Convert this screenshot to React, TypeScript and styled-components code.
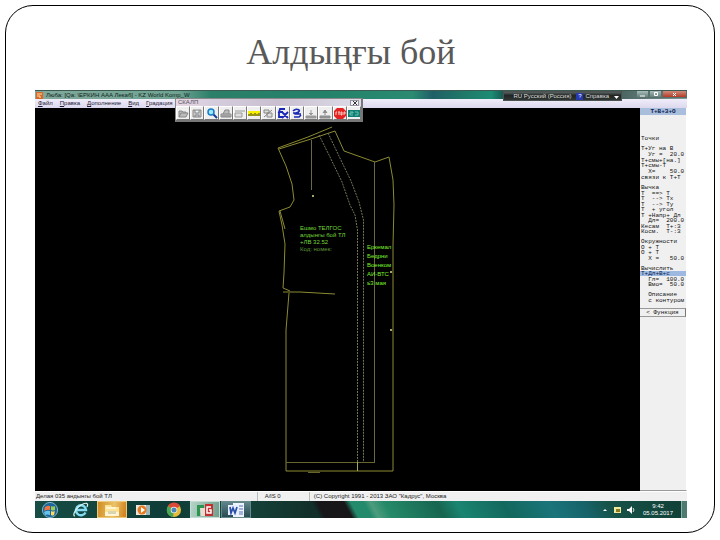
import React from "react";
import styled, { createGlobalStyle, css } from "styled-components";

const Global = createGlobalStyle`
  * { box-sizing: border-box; }
  body { margin: 0; background: #fff; font-family: "Liberation Sans", Arial, sans-serif; }
  button { font: inherit; color: inherit; border: 0; padding: 0; margin: 0; background: none; cursor: pointer; }
`;

const Page = styled.div`
  min-height: 100vh;
  padding: 5px 5px 7px;
  display: flex;
`;

const Frame = styled.main`
  flex: 1;
  display: flex;
  flex-direction: column;
  border: 1px solid #000;
  border-radius: 28px;
  padding: 0 27px 14px 29px;
`;

const Heading = styled.h1`
  margin: 0;
  height: 84px;
  padding: 24px 20px 0 0;
  text-align: center;
  font: 400 36px/44px "Liberation Serif", "Times New Roman", serif;
  color: #595959;
`;

const Screen = styled.section`
  position: relative;
  flex: 1;
  display: flex;
  flex-direction: column;
  background: #000;
`;

const TitleBar = styled.header`
  height: 9px;
  display: flex;
  align-items: center;
  gap: 3px;
  padding-left: 1px;
  font-size: 6px;
  line-height: 8px;
  color: #10241f;
  white-space: nowrap;
  border-top: 1px solid #3c5a52;
  background: linear-gradient(90deg, #81a99b 0, #6fa391 22%, #2c7f69 27%, #23826a 45%, #2a8a72 58%, #1f5f66 61%, #207a69 66%, #1c8c74 70%, #14373a 73%, #44605d 89%, #849995 100%);
`;

const AppIcon = styled.svg`
  width: 7px;
  height: 7px;
`;

const WindowButtons = styled.div`
  margin-left: auto;
  display: flex;
  align-self: flex-start;
`;

const WindowButton = styled.button<{ $close?: boolean }>`
  width: ${(p) => (p.$close ? 25 : 13)}px;
  height: 7px;
  display: grid;
  place-items: center;
  color: #fff;
  border: 1px solid #59706d;
  border-top: 0;
  background: ${(p) => (p.$close ? "linear-gradient(#d08b7c, #b33b27)" : "linear-gradient(#a9bdba, #637f7c)")};
  svg { width: 7px; height: 5px; }
`;

const MenuBar = styled.nav`
  height: 9px;
  display: flex;
  align-items: center;
  gap: 7px;
  padding-left: 3px;
  font-size: 6px;
  line-height: 9px;
  color: #1d1b35;
  background: linear-gradient(#f0edfa, #dcd8ee);
`;

const MenuItem = styled.button`
  &::first-letter { text-decoration: underline; }
`;

const Workspace = styled.div`
  flex: 1;
  display: flex;
`;

const Canvas = styled.svg`
  flex: 1;
  min-width: 0;
  display: block;
  background: #000;
`;

const SidePanel = styled.aside`
  width: 47px;
  display: flex;
  flex-direction: column;
  background: #f0f0f0;
  border-right: 1px solid #fff;
  border-bottom: 1px solid #999;
  font: 6px/5px "Liberation Mono", "Courier New", monospace;
  color: #111;
  white-space: pre;
`;

const PanelTitle = styled.div`
  height: 7px;
  margin-bottom: 21px;
  font-weight: 700;
  line-height: 7px;
  text-align: center;
  color: #0c1d4c;
  background: #a9bddd;
`;

const Group = styled.div<{ $height: number }>`
  height: ${(p) => p.$height}px;
  margin-bottom: 5px;
  display: flex;
  flex-direction: column;
  justify-content: space-between;
`;

const Command = styled.button<{ $active?: boolean }>`
  height: 5px;
  padding-left: 1px;
  text-align: left;
  line-height: 5px;
  white-space: pre;
  ${(p) => p.$active && css`background: #9db9e2; color: #0c1d4c;`}
`;

const FunctionButton = styled.button`
  height: 9px;
  border-top: 1px solid #999;
  border-bottom: 1px solid #999;
  border-right: 1px solid #777;
  text-align: center;
  line-height: 7px;
`;

const StatusBar = styled.footer`
  height: 10px;
  display: flex;
  font-size: 6px;
  line-height: 9px;
  color: #222;
  background: #f0f0f0;
  border-top: 1px solid #fff;
  white-space: nowrap;
`;

const StatusCell = styled.span<{ $basis?: number }>`
  flex: ${(p) => (p.$basis ? `0 0 ${p.$basis}%` : "1")};
  padding-left: 1px;
  & + & { border-left: 1px solid #bbb; padding-left: 4px; }
`;

const StatusCode = styled(StatusCell)`
  && { padding-left: 7px; }
`;

const Taskbar = styled.div`
  height: 17px;
  display: flex;
  align-items: stretch;
  background: linear-gradient(62deg, transparent 43%, #17171a 44%, #17171a 48%, #238a6b 49%, #238a6b 51%, #4d9c7e 52%, #258a69 54%, #176650 62%, #1a8571 65%, #13685d 72%, #1a747a 79%, #17636a 84%, #165248 88%, #103e35 100%),
    linear-gradient(90deg, #164d45, #0f3c36 20%, #15473f 30%, #123029 42%);
`;

const TaskButton = styled.button<{ $tone?: "gold" | "light" | "dark" }>`
  width: 30px;
  margin-right: 1px;
  display: grid;
  place-items: center;
  svg { width: 18px; height: 16px; }
  ${(p) => p.$tone === "gold" && css`background: linear-gradient(100deg, #d18c24, #eac36a 55%, #d07c18); border: 1px solid #edcb7a;`}
  ${(p) => p.$tone === "light" && css`background: linear-gradient(100deg, #b4d4c7, #719f8d); border: 1px solid #c5ddd4;`}
  ${(p) => p.$tone === "dark" && css`background: linear-gradient(#60858a, #284b52); border: 1px solid #66898b;`}
`;

const Tray = styled.div`
  margin-left: auto;
  display: flex;
  align-items: center;
  gap: 5px;
  color: #fff;
  svg { width: 8px; height: 8px; }
`;

const Clock = styled.time`
  width: 36px;
  text-align: center;
  font-size: 6px;
  line-height: 7px;
`;

const ShowDesktop = styled.button`
  width: 6px;
  align-self: stretch;
  border-left: 1px solid #8ab1a8;
  background: #4d7b70;
`;

const Palette = styled.div`
  position: absolute;
  left: 140px;
  top: 8px;
  width: 188px;
  border: 1px solid #888;
  border-right: 2px solid #777;
  border-bottom: 2px solid #777;
  background: #ddd;
`;

const PaletteTitle = styled.div`
  height: 7px;
  display: flex;
  justify-content: space-between;
  align-items: center;
  padding: 0 2px;
  font-size: 6px;
  line-height: 7px;
  color: #55505e;
  background: linear-gradient(90deg, #e8d7e2, #d5cddd 20%, #c9bfd0 55%, #dedce8);
`;

const PaletteClose = styled.button`
  width: 9px;
  height: 6px;
  display: grid;
  place-items: center;
  background: #f2f2f6;
  border: 1px solid #9695a2;
  svg { width: 4px; height: 4px; }
`;

const Tools = styled.div`
  display: grid;
  grid-template-columns: repeat(13, 1fr);
`;

const Tool = styled.button`
  height: 14px;
  display: grid;
  place-items: center;
  background: #efefef;
  border: 1px solid #fff;
  border-right-color: #777;
  border-bottom-color: #777;
  svg { width: 12px; height: 11px; }
`;

const LanguageBar = styled.div`
  position: absolute;
  right: 65px;
  top: 1px;
  width: 119px;
  height: 10px;
  display: flex;
  align-items: center;
  justify-content: flex-end;
  gap: 5px;
  padding-right: 2px;
  font-size: 6px;
  line-height: 8px;
  white-space: nowrap;
  color: #ddd;
  background: linear-gradient(#59605f, #202524 45%, #303634);
  border: 1px solid #4b5351;
  svg { width: 5px; height: 6px; }
`;

const HelpButton = styled.button`
  display: flex;
  align-items: center;
  gap: 2px;
`;

const HelpMark = styled.span`
  width: 7px;
  height: 7px;
  text-align: center;
  line-height: 7px;
  color: #fff;
  background: #2539b0;
`;

const menus = ["Файл", "Правка", "Дополнение", "Вид", "Градация"];

const groups: { height: number; lines: string[] }[] = [
  { height: 5, lines: ["Точки"] },
  { height: 34, lines: ["Т+Уг на В", "  Уг =  20.0", "Т+смы+[на.]", "Т+смы-Т", "  Х=    50.0", "связи к Т+Т"] },
  { height: 49, lines: ["Вычка", "Т  ==> Т", "Т  --> Тх", "Т  --> Ту", "Т  + угол", "Т +Напр+ Дл", "  Дл=  200.0", "Кесам  Т+:З", "Косм.  Т-:З"] },
  { height: 22, lines: ["Окружности", "О + Т", "О + Т", "  Х =   50.0"] },
  { height: 21, lines: ["Вычислить", "Т+Дл+В+с", "  Гл=  100.0", "  Вмо=  50.0"] },
  { height: 11, lines: ["  Описание", "  с контуром"] },
];

const toolIcons: { name: string; art: React.ReactNode }[] = [
  { name: "Открыть", art: <path d="M2 9V3h3l1 1h3v1M2 9l2-4h7L9 9Z" fill="#bbb" stroke="#888" /> },
  { name: "Сохранить", art: <path d="M2 2h8v7H2ZM4 2v3h4V2M4 9V7h4v2" fill="#ccc" stroke="#888" /> },
  { name: "Лупа", art: <><path d="m7 6 4 4" stroke="#183d90" strokeWidth="2" /><circle cx="5" cy="4" r="3" fill="#9ceaff" stroke="#197ac8" strokeWidth="1.5" /></> },
  { name: "Печать", art: <path d="M1 9V6h10v3ZM3 6l2-4h4v4M2 8h8" fill="#bbb" stroke="#888" /> },
  { name: "Лист", art: <path d="M1 3h10M1 5h7v4H1Z" fill="#ddd" stroke="#999" /> },
  { name: "Линейка", art: <><path d="M0 3h12v5H0Z" fill="#f8f000" /><path d="M1 8V6m2 2V5m2 3V6m2 2V5m2 3V6m2 2V5" stroke="#333" /></> },
  { name: "Копия", art: <path d="M2 2h5v3H2Zm3 3h5v4H5ZM2 9l8-7" fill="#ddd" stroke="#888" /> },
  { name: "Удалить", art: <path d="M8 1H3L2 4h4M2 4v5h4M5 4l6 6m0-6-6 6" fill="none" stroke="#1929b5" strokeWidth="1.8" /> },
  { name: "Повтор", art: <path d="M2 3q3-3 6-1c2 2-5 3-4 4h6M3 9h5l2-2M2 5h6" fill="none" stroke="#1929b5" strokeWidth="1.6" /> },
  { name: "Вниз", art: <path d="M1 8h10v2H1Zm5-6v4M4 5l2 2 2-2" fill="#999" stroke="#999" /> },
  { name: "Вверх", art: <path d="M1 8h10v2H1Zm5-1V3M4 5l2-3 2 3" fill="#999" stroke="#888" /> },
  { name: "Стоп", art: <><path d="M3 0h6l3 3v5l-3 3H3L0 8V3Z" fill="#e52222" /><path d="M3 4H2v3m2-3h2M5 4v3m2-3h1v3H7Zm3 3V4h1v2" fill="none" stroke="#ffd2c8" /></> },
  { name: "Экран", art: <><path d="M0 2h12v7H0Z" fill="#137d76" /><path d="M2 4h3v1H2v2h3m2-3h3v3H7" fill="none" stroke="#68c2ac" /></> },
];

const StartIcon = () => (
  <svg viewBox="0 0 18 16"><circle cx="9" cy="8" r="7.6" fill="#1d659b" stroke="#7db4c9" /><path d="M4 5q3-2 5-1v4q-2-1-6 1Z" fill="#ef7340" /><path d="M10 4q2 1 4 0v4q-2 1-4 0Z" fill="#9ccc4b" /><path d="M3 10q3-2 6-1v4q-3-1-5 0Z" fill="#64c4ed" /><path d="M10 9q2 1 4 0l-1 4q-2 1-3 0Z" fill="#ffd95c" /></svg>
);
const ExplorerIcon = () => (
  <svg viewBox="0 0 18 16"><path d="M13.5 10.5A5 5 0 1 1 14 8H5" fill="none" stroke="#83dcf3" strokeWidth="2.4" /><path d="M3 14C0 14 3 7 9 3c5-3 8-2 6 2" fill="none" stroke="#d7f2ef" strokeWidth="1.2" /></svg>
);
const FolderIcon = () => (
  <svg viewBox="0 0 18 16"><path d="M2 3h6l1 2h7v9H2Z" fill="#ffe394" /><path d="M3 5h10v2H3Zm-1 5h14v4H2Z" fill="#fff5d2" /><path d="M5 9h8v3H5Z" fill="#d8d6b2" /></svg>
);
const PlayerIcon = () => (
  <svg viewBox="0 0 18 16"><path d="M5 3h11v10H5Z" fill="#9eb5b9" /><path d="M2 3h10v10H2Z" fill="#e8e8de" /><circle cx="8" cy="8" r="4.5" fill="#e77a20" /><path d="m7 5 4 3-4 3Z" fill="#fff" /></svg>
);
const ChromeIcon = () => (
  <svg viewBox="0 0 18 16"><circle cx="9" cy="8" r="7" fill="#e5bb38" /><path d="M9 8 3 4a7 7 0 0 1 12 0Z" fill="#dd4937" /><path d="M9 8 3 4a7 7 0 0 0 5 11Z" fill="#4aa554" /><circle cx="9" cy="8" r="3.3" fill="#f2eee0" /><circle cx="9" cy="8" r="2.5" fill="#4d86bd" /></svg>
);
const PatternIcon = () => (
  <svg viewBox="0 0 18 16"><path d="M1 3h7v3H4v8H1Z" fill="#2d9350" /><path d="M4 6h5v8H5Z" fill="#e6ded0" /><path d="M9 2h8v12H9Z" fill="#c42f30" /><path d="M15 5h-4v6h4V8h-2" fill="none" stroke="#fff" strokeWidth="1.5" /></svg>
);
const WordIcon = () => (
  <svg viewBox="0 0 18 16"><path d="M6 1h11v14H6Z" fill="#eef3fb" /><path d="M12 4h4m-4 3h4m-4 3h4m-4 2h4" stroke="#5275b7" /><path d="M1 3h11v10H1Z" fill="#e7eeff" /><path d="m3 5 1 6 2-5 2 5 2-6" fill="none" stroke="#284ea7" strokeWidth="1.7" /></svg>
);

const tasks: { name: string; tone?: "gold" | "light" | "dark"; icon: React.ReactNode }[] = [
  { name: "Пуск", icon: <StartIcon /> },
  { name: "Internet Explorer", icon: <ExplorerIcon /> },
  { name: "Проводник", tone: "gold", icon: <FolderIcon /> },
  { name: "Проигрыватель", icon: <PlayerIcon /> },
  { name: "Chrome", icon: <ChromeIcon /> },
  { name: "Градация", tone: "light", icon: <PatternIcon /> },
  { name: "Word", tone: "dark", icon: <WordIcon /> },
];

const Drawing = () => (
  <Canvas viewBox="35 108 605 383" preserveAspectRatio="xMinYMin meet" role="img" aria-label="Алдыңғы бой">
    <g fill="none" stroke="#8c8b32" strokeWidth="1">
      <path d="M278 148 308 137 332 127M279 149l32-10 24-8 9 20 31 11 14-5 4 23 1 25-1 40v226H286V330l3-37" />
      <path d="m278 148 8 18 6 18 2 16-4 7-11 4 3 14 3 19-1 29-1 15 7 3M280 211l5 18M283 292h17l35 2" />
      <path d="M286 462.500h89M308 472.500h12" stroke="#66652e" />
      <path d="M374.500 162v300M311.500 140v50" stroke="#696948" />
      <path d="M357.500 462v9" stroke="#aaa95d" />
      <path d="m319 135 10 20 13 27 8 23 5 10 2.500 15v232M328 133l10 21 13 27 8 21 4.500 18v242" stroke="#77765a" strokeDasharray="2 1" />
    </g>
    <path d="M312 195h2v2h-2Zm78 76h2v2h-2Zm0 58h2v2h-2Z" fill="#a5a56a" />
    <g fill="#75d83a" fontFamily="Liberation Sans, Arial, sans-serif" fontSize="6">
      <text x="300" y="230">Ешмо ТЕЛГОС</text>
      <text x="300" y="237">алдынгы бой ТЛ</text>
      <text x="300" y="244">+ЛВ 32.52</text>
      <text x="300" y="251" fill="#5d9735">Код: номек:</text>
    </g>
    <g fill="#7bf12c" fontFamily="Liberation Sans, Arial, sans-serif" fontSize="6">
      <text x="367" y="249">Еркемал</text>
      <text x="367" y="258">Бедрни</text>
      <text x="367" y="267">Военком</text>
      <text x="367" y="276">АИ-ВТС</text>
      <text x="367" y="285">≤3 мая</text>
    </g>
  </Canvas>
);

export default function App() {
  return (
    <>
      <Global />
      <Page>
        <Frame>
          <Heading>Алдыңғы бой</Heading>
          <Screen>
            <TitleBar>
              <AppIcon viewBox="0 0 7 7"><path d="M0 0h7v7H0Z" fill="#d7682b" /><path d="M1 2h5M1 4h3v2" fill="none" stroke="#ffe0a0" /></AppIcon>
              <span>Люба: [Qa: \ЕРКИН ААА Лекаб] - KZ World Komp_W</span>
              <WindowButtons>
                <WindowButton aria-label="Свернуть"><svg viewBox="0 0 7 5"><path d="M1 4h5" stroke="currentColor" /></svg></WindowButton>
                <WindowButton aria-label="Развернуть"><svg viewBox="0 0 7 5"><path d="M2.500.5h3v3h-3Z" fill="none" stroke="currentColor" /></svg></WindowButton>
                <WindowButton $close aria-label="Закрыть"><svg viewBox="0 0 7 5"><path d="m2 1 3 3m0-3L2 4" stroke="currentColor" /></svg></WindowButton>
              </WindowButtons>
            </TitleBar>
            <MenuBar>{menus.map((m) => <MenuItem key={m}>{m}</MenuItem>)}</MenuBar>
            <Workspace>
              <Drawing />
              <SidePanel>
                <PanelTitle>Т+В+З+О</PanelTitle>
                {groups.map((g, i) => (
                  <Group key={i} $height={g.height}>
                    {g.lines.map((line, j) => <Command key={j} $active={line === "Т+Дл+В+с"}>{line}</Command>)}
                  </Group>
                ))}
                <FunctionButton>&lt; Функция</FunctionButton>
              </SidePanel>
            </Workspace>
            <StatusBar>
              <StatusCell $basis={34}>Делая 035 андынгы бой ТЛ</StatusCell>
              <StatusCode $basis={8}>A/lS 0</StatusCode>
              <StatusCell>(C) Copyright 1991 - 2013 ЗАО "Кадрус", Москва</StatusCell>
            </StatusBar>
            <Taskbar>
              {tasks.map((t) => <TaskButton key={t.name} $tone={t.tone} aria-label={t.name}>{t.icon}</TaskButton>)}
              <Tray>
                <svg viewBox="0 0 8 8"><path d="m2 5 2-2 2 2Z" fill="#fff" /></svg>
                <svg viewBox="0 0 8 8"><path d="M0 1h7v6H0Z" fill="#eee9a0" /><path d="M2 3h4v3H2Z" fill="#8c7b1c" /></svg>
                <svg viewBox="0 0 8 8"><path d="M0 3h2l3-3v8L2 5H0Z" fill="#fff" /><path d="M6 2q2 2 0 4" fill="none" stroke="#ddd" /></svg>
                <Clock dateTime="2017-05-05T09:42">9:42<br />05.05.2017</Clock>
                <ShowDesktop aria-label="Рабочий стол" />
              </Tray>
            </Taskbar>
            <Palette>
              <PaletteTitle>
                <span>СКАЛП</span>
                <PaletteClose aria-label="Закрыть панель"><svg viewBox="0 0 4 4"><path d="m0 0 4 4m0-4L0 4" stroke="#333" /></svg></PaletteClose>
              </PaletteTitle>
              <Tools>
                {toolIcons.map((t) => <Tool key={t.name} aria-label={t.name}><svg viewBox="0 0 12 11">{t.art}</svg></Tool>)}
              </Tools>
            </Palette>
            <LanguageBar>
              <span>RU Русский (Россия)</span>
              <HelpButton><HelpMark>?</HelpMark>Справка</HelpButton>
              <svg viewBox="0 0 5 6"><path d="M0 3h5L2.500 6Z" fill="#fff" /></svg>
            </LanguageBar>
          </Screen>
        </Frame>
      </Page>
    </>
  );
}
